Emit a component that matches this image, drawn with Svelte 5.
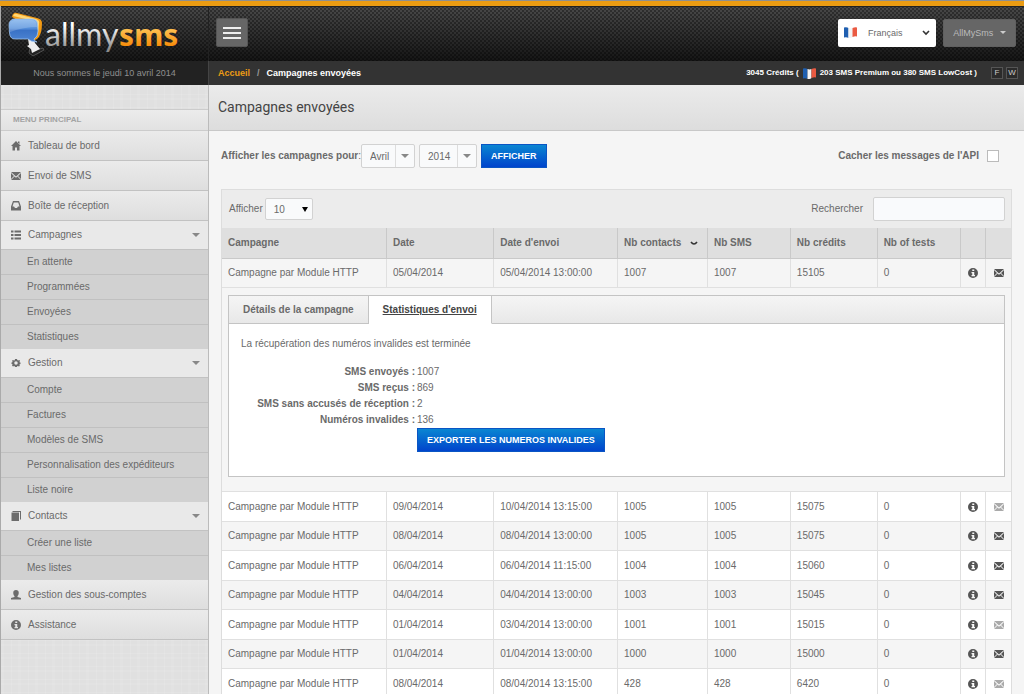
<script>
  const menu = [
    { label: 'Tableau de bord', icon: 'home' },
    { label: 'Envoi de SMS', icon: 'mail' },
    { label: 'Boîte de réception', icon: 'inbox' },
    { label: 'Campagnes', icon: 'list', children: ['En attente', 'Programmées', 'Envoyées', 'Statistiques'] },
    {
      label: 'Gestion',
      icon: 'gear',
      children: ['Compte', 'Factures', 'Modèles de SMS', 'Personnalisation des expéditeurs', 'Liste noire']
    },
    { label: 'Contacts', icon: 'book', children: ['Créer une liste', 'Mes listes'] },
    { label: 'Gestion des sous-comptes', icon: 'user' },
    { label: 'Assistance', icon: 'info' }
  ];

  // Column widths are percentages of the table
  const columns = [
    { label: 'Campagne', width: 20.9 },
    { label: 'Date', width: 13.6 },
    { label: "Date d'envoi", width: 15.7 },
    { label: 'Nb contacts', width: 11.4, sorted: true },
    { label: 'Nb SMS', width: 10.5 },
    { label: 'Nb crédits', width: 11 },
    { label: 'Nb of tests', width: 10.6 },
    { label: '', width: 3.2 },
    { label: '', width: 3.1 }
  ];

  const campaigns = [
    { cells: ['05/04/2014', '05/04/2014 13:00:00', 1007, 1007, 15105, 0], mail: true, open: true },
    { cells: ['09/04/2014', '10/04/2014 13:15:00', 1005, 1005, 15075, 0], mail: false },
    { cells: ['08/04/2014', '08/04/2014 13:00:00', 1005, 1005, 15075, 0], mail: true },
    { cells: ['06/04/2014', '06/04/2014 11:15:00', 1004, 1004, 15060, 0], mail: true },
    { cells: ['04/04/2014', '04/04/2014 13:00:00', 1003, 1003, 15045, 0], mail: true },
    { cells: ['01/04/2014', '03/04/2014 13:00:00', 1001, 1001, 15015, 0], mail: false },
    { cells: ['01/04/2014', '01/04/2014 13:00:00', 1000, 1000, 15000, 0], mail: true },
    { cells: ['08/04/2014', '08/04/2014 13:15:00', 428, 428, 6420, 0], mail: false }
  ];

  const stats = [
    ['SMS envoyés :', 1007],
    ['SMS reçus :', 869],
    ['SMS sans accusés de réception :', 2],
    ['Numéros invalides :', 136]
  ];

  let hideApi = $state(false);
  let search = $state('');
</script>

{#snippet icon(name)}
  <svg class="icon" viewBox="0 0 20 20" aria-hidden="true">
    {#if name === 'home'}
      <path d="M10 0 20 10h-3v9h-5v-6H8v6H3v-9H0z" /><path d="M14 1h3v5l-3-3z" />
    {:else if name === 'mail'}
      <path d="M0 2h20l-10 9z" />
      <path d="M0 4l6 6-6 6zM20 4l-6 6 6 6zM7 11l3 2.500 3-2.500 7 7H0z" />
    {:else if name === 'inbox'}
      <path fill-rule="evenodd" d="M4 0h12l4 11v8H0v-8zM5.500 3 3 11h3l2 3h4l2-3h3l-2.500-8z" />
    {:else if name === 'list'}
      <path d="M0 1h5v4H0zM7 1h13v4H7zM0 8h5v4H0zM7 8h13v4H7zM0 15h5v4H0zM7 15h13v4H7z" />
    {:else if name === 'gear'}
      <path
        fill-rule="evenodd"
        d="M8 2h4l.5 2 2 .8L16.500 4 18 5.500l-1 2 .6 1.300 1.400.2v3l-1.600.3-.6 1.700 1 1.500L16 17l-2.200-1-1.500.5L12 18H8l-.5-1.500-1.500-.6L4 17l-2-2 1-1.500-.6-1.500L1 12V9l1.500-.5.6-1.500L2 5.500 4 4l2 1 1.500-.6zM10 6.500a3.500 3.500 0 1 0 0 7 3.500 3.500 0 0 0 0-7z"
      />
    {:else if name === 'book'}
      <path d="M3 0h17v17h-2V2H3z" /><path d="M1 3h15v17H1z" />
    {:else if name === 'user'}
      <path d="M10 0c3.500 0 5.500 2 5.500 5.500 0 3-1 5-2.500 6.500v2L20 16v3H0v-3l7-2v-2C5.500 10.500 4.500 8.500 4.500 5.500 4.500 2 6.500 0 10 0z" />
    {:else if name === 'info'}
      <path
        fill-rule="evenodd"
        d="M10 0a10 10 0 1 0 0 20 10 10 0 0 0 0-20zM8.500 3h4v3h-4zM7 8h5.500v6H14v2.500H7V14h1.500v-3.500H7z"
      />
    {/if}
  </svg>
{/snippet}

{#snippet flag()}
  <svg class="flag" viewBox="0 0 13 11" aria-hidden="true">
    <path fill="#1f5fb0" d="M0 .5Q3 0 4.500 1v10Q3 10 0 10.500z" />
    <path fill="#f4f4f4" d="M4.500 1q2 .8 4 0v9q-2 1.500-4 1z" />
    <path fill="#ea5a42" d="M8.500 1q2.500-1 4.500-.5v9q-2-.5-4.500.5z" />
  </svg>
{/snippet}

<div class="page">
  <header class="topbar">
    <a class="brand side" href="#accueil" aria-label="allmysms">
      <svg class="logo" viewBox="0 0 180 50">
        <defs>
          <linearGradient id="silver" x1="0" y1="0" x2="0" y2="1">
            <stop offset="0.3" stop-color="#fff" /><stop offset="0.9" stop-color="#8c8c8c" />
          </linearGradient>
          <linearGradient id="amber" x1="0" y1="0" x2="0" y2="1">
            <stop offset="0.4" stop-color="#fdbd4c" /><stop offset="0.8" stop-color="#f68a07" />
          </linearGradient>
          <linearGradient id="bubble" x1="0" y1="0" x2="0" y2="1">
            <stop offset="0" stop-color="#7fb2ec" /><stop offset="0.4" stop-color="#5590dc" />
            <stop offset="0.5" stop-color="#3a72c6" /><stop offset="1" stop-color="#4f86d4" />
          </linearGradient>
        </defs>
        <path fill="#222" stroke="#777" stroke-width=".6" d="M29 39l6 2 7-2 1 2-11 6-4-3z" />
        <path fill="#eee" d="M27 30l6 1 1 3 5 6-8 4-1-4-4-3 2-1z" />
        <path fill="#f39a13" d="M11 8q1-5 5-4l20 5q5 1 5 5 0 12-5 16l-4 2-4-14z" />
        <path fill="#ffd675" d="M12 7q1-3 4-2l19 5q4 1 3 5l-1 9-4-12z" />
        <path
          fill="url(#bubble)"
          stroke="#a8cbf3"
          stroke-width=".7"
          d="M13 10h18q5 0 5.500 5l.5 7q0 6-4 8 0 2 3 3-6 0-9-3H14q-5 0-5.500-6L8 16q0-5 5-6z"
        />
        <path fill="#fff" opacity=".2" d="M13 11h18q4 0 4.500 4l.5 3q-13 0-27 5l-.5-7q0-4 4.500-5z" />
        <text x="44" y="37" fill="url(#silver)" class="word">allmy</text>
        <text x="118" y="37" fill="url(#amber)" class="word strong">sms</text>
      </svg>
    </a>
    <div class="topmain">
      <button class="burger" aria-label="Menu"><i></i><i></i><i></i></button>
      <div class="account">
        <div class="lang">
          {@render flag()}
          <select aria-label="Langue"><option>Français</option></select>
          <svg class="chevron" viewBox="0 0 8 6" aria-hidden="true"><path d="M1 1l3 3 3-3" /></svg>
        </div>
        <button class="user">AllMySms <span class="caret"></span></button>
      </div>
    </div>
  </header>

  <div class="infobar">
    <div class="side today">Nous sommes le jeudi 10 avril 2014</div>
    <div class="infomain">
      <nav class="crumbs"><a href="#accueil">Accueil</a><span>/</span><b>Campagnes envoyées</b></nav>
      <div class="credits"><span>3045 Crédits (</span>{@render flag()}<span>203 SMS Premium ou 380 SMS LowCost )</span></div>
      <div class="modes"><button>F</button><button>W</button></div>
    </div>
  </div>

  <div class="body">
    <aside class="side sidebar">
      <h2>MENU PRINCIPAL</h2>
      <ul class="menu">
        {#each menu as item}
          <li>
            <a class="entry" class:group={item.children} href="#{item.icon}">
              {@render icon(item.icon)}
              <span>{item.label}</span>
              {#if item.children}<i class="caret"></i>{/if}
            </a>
            {#if item.children}
              <ul class="sub">
                {#each item.children as child}
                  <li><a href="#{item.icon}">{child}</a></li>
                {/each}
              </ul>
            {/if}
          </li>
        {/each}
      </ul>
    </aside>

    <main>
      <h1>Campagnes envoyées</h1>
      <div class="content">
        <form class="filters">
          <label for="month"><b>Afficher les campagnes pour</b>:</label>
          <div class="picker">
            <select id="month"><option>Avril</option></select><span class="arrow"><i class="caret"></i></span>
          </div>
          <div class="picker year">
            <select aria-label="Année"><option>2014</option></select><span class="arrow"><i class="caret"></i></span>
          </div>
          <button class="primary" type="button">AFFICHER</button>
          <label class="api"><b>Cacher les messages de l'API</b><input type="checkbox" bind:checked={hideApi} /></label>
        </form>

        <section class="panel">
          <div class="tools">
            <label for="length">Afficher</label>
            <div class="length">
              <select id="length"><option>10</option></select><i class="caret"></i>
            </div>
            <label class="search">Rechercher <input type="text" bind:value={search} /></label>
          </div>
          <table>
            <colgroup>
              {#each columns as col}<col style="width: {col.width}%" />{/each}
            </colgroup>
            <thead>
              <tr>
                {#each columns as col}
                  <th>
                    {col.label}
                    {#if col.sorted}
                      <svg class="sort" viewBox="0 0 8 6" aria-hidden="true"><path d="M1 1q3 4 6 0" /></svg>
                    {/if}
                  </th>
                {/each}
              </tr>
            </thead>
            <tbody>
              {#each campaigns as campaign, i}
                <tr class:even={i % 2 === 0}>
                  <td>Campagne par Module HTTP</td>
                  {#each campaign.cells as cell}<td>{cell}</td>{/each}
                  <td class="action">{@render icon('info')}</td>
                  <td class="action" class:off={!campaign.mail}>{@render icon('mail')}</td>
                </tr>
                {#if campaign.open}
                  <tr>
                    <td class="detail" colspan="9">
                      <div class="box">
                        <div class="tabs">
                          <button>Détails de la campagne</button>
                          <button class="active">Statistiques d'envoi</button>
                          <span class="rest"></span>
                        </div>
                        <div class="stats">
                          <p>La récupération des numéros invalides est terminée</p>
                          <dl>
                            {#each stats as [name, value]}
                              <dt>{name}</dt>
                              <dd>{value}</dd>
                            {/each}
                            <dd class="export"><button class="primary">EXPORTER LES NUMEROS INVALIDES</button></dd>
                          </dl>
                        </div>
                      </div>
                    </td>
                  </tr>
                {/if}
              {/each}
            </tbody>
          </table>
        </section>
      </div>
    </main>
  </div>
</div>

<style>
  :global(body) {
    background: #f5f5f5;
  }

  :global(html) {
    scrollbar-width: none;
  }

  .page {
    display: flex;
    flex-direction: column;
    box-sizing: border-box;
    min-height: 100vh;
    border-top: 1px solid #8f8f8f;
    font: 10px/16px 'Liberation Sans', Arial, sans-serif;
    color: #6a6a6a;
  }

  .page :is(button, select, input) {
    box-sizing: border-box;
    margin: 0;
    font-family: inherit;
    color: inherit;
  }

  .page a {
    color: inherit;
    text-decoration: none;
  }

  ul, dl, dd, p, h1, h2 {
    margin: 0;
    padding: 0;
    list-style: none;
  }

  .side {
    box-sizing: border-box;
    flex: 0 0 209px;
    border-left: 1px solid #aaa;
    border-right: 1px solid #bbb;
  }

  .caret {
    display: inline-block;
    border: 4px solid transparent;
    border-top-color: #888;
    border-bottom: 0;
  }

  .icon {
    flex: none;
    width: 10px;
    height: 10px;
    fill: #6c6c6c;
  }

  .flag {
    width: 13px;
    height: 11px;
  }

  /* Dark header with the woven dot pattern */
  .topbar {
    display: flex;
    height: 55px;
    border-top: 5px solid #eb9c13;
    box-shadow: inset 0 1px #222;
    background:
      conic-gradient(rgba(0, 0, 0, 0.35) 25%, transparent 0 50%, rgba(0, 0, 0, 0.35) 0 75%, transparent 0) 0 0 / 4px 4px,
      linear-gradient(#4a4a4a, #151515);
  }

  .brand {
    display: block;
    border-right-color: #222;
  }

  .logo {
    display: block;
    width: 180px;
    height: 50px;
    margin-top: 3px;
  }

  .word {
    font: 32px Lato, sans-serif;
  }

  .strong {
    font: bold 30px 'Open Sans', sans-serif;
  }

  .topmain {
    display: flex;
    flex: 1;
    align-items: center;
    justify-content: space-between;
    padding: 0 8px 2px 7px;
  }

  .burger {
    display: flex;
    flex-direction: column;
    gap: 3px;
    align-items: center;
    justify-content: center;
    width: 32px;
    height: 29px;
    border: 1px solid #555;
    border-radius: 2px;
    background: #666;
  }

  .burger i {
    width: 18px;
    height: 2px;
    background: #eee;
  }

  .account {
    display: flex;
    gap: 7px;
  }

  .lang {
    display: flex;
    align-items: center;
    width: 98px;
    height: 28px;
    box-sizing: border-box;
    padding: 0 6px;
    border-radius: 2px;
    background: #fff;
  }

  .lang select {
    appearance: none;
    flex: 1;
    padding: 0 0 0 11px;
    border: 0;
    background: none;
    font-size: 9px;
  }

  .chevron, .sort {
    width: 8px;
    height: 6px;
    fill: none;
    stroke: #333;
    stroke-width: 1.6;
  }

  .page .user {
    width: 73px;
    height: 28px;
    padding: 0;
    border: 1px solid #606060;
    border-radius: 2px;
    background: #666;
    color: #bbb;
    font-size: 9px;
  }

  .user .caret {
    margin: 0 0 2px 4px;
    border-width: 3px;
    border-bottom: 0;
    border-top-color: #ccc;
  }

  .infobar {
    display: flex;
    height: 24px;
    background: #333;
    font-size: 9px;
    line-height: 24px;
  }

  .today {
    background: #222;
    border-right-color: #444;
    color: #8f8f8f;
    text-align: center;
  }

  .infomain {
    display: flex;
    flex: 1;
    padding: 0 6px 0 9px;
    color: #fff;
    font-weight: bold;
  }

  .crumbs a {
    color: #eb9c13;
  }

  .crumbs span {
    padding: 0 7px;
    color: #999;
  }

  .credits {
    display: flex;
    gap: 4px;
    align-items: center;
    margin-left: auto;
    font-size: 8px;
  }

  .modes {
    display: flex;
    gap: 3px;
    align-items: center;
    padding-left: 14px;
  }

  .page .modes button {
    width: 12px;
    height: 12px;
    padding: 0;
    border: 1px solid #555;
    background: #2b2b2b;
    color: #ccc;
    font-size: 8px;
    line-height: 10px;
  }

  .body {
    display: flex;
    flex: 1;
  }

  /* Linen texture */
  .sidebar {
    padding-top: 24px;
    background:
      repeating-linear-gradient(90deg, rgba(255, 255, 255, 0.08) 0 3px, transparent 3px 10px, rgba(255, 255, 255, 0.1) 10px 11px, transparent 11px 17px),
      repeating-linear-gradient(rgba(255, 255, 255, 0.08) 0 2px, transparent 2px 9px, rgba(255, 255, 255, 0.1) 9px 10px, transparent 10px 13px),
      #e0e0e0;
  }

  .sidebar h2 {
    padding-left: 12px;
    border: 1px solid #ccc;
    border-width: 1px 0;
    background: linear-gradient(#ececec, #e2e2e2);
    color: #a3a3a3;
    font-size: 8px;
    line-height: 20px;
  }

  .entry {
    display: flex;
    gap: 7px;
    align-items: center;
    height: 29px;
    padding: 0 8px 0 10px;
    border-bottom: 1px solid #c2c2c2;
    background: linear-gradient(#ebebeb, #dedede);
  }

  .entry.group {
    height: 28px;
    background: #e9e9e9;
  }

  .entry .caret {
    margin-left: auto;
  }

  .sub {
    background: #d1d1d1;
  }

  .sub li {
    padding-left: 26px;
    border-bottom: 1px solid #c0c0c0;
    line-height: 24px;
  }

  .sub li:last-child {
    border-bottom: 0;
  }

  main {
    flex: 1;
    min-width: 0;
    background: #f5f5f5;
  }

  h1 {
    padding-left: 9px;
    border-bottom: 1px solid #c8c8c8;
    background: linear-gradient(#ebebeb, #dddddd);
    color: #444;
    font: 14px/45px Roboto, sans-serif;
  }

  .content {
    padding: 13px 12px 0;
  }

  .filters {
    display: flex;
    align-items: center;
    height: 24px;
    margin-bottom: 21px;
  }

  .picker {
    display: flex;
    box-sizing: border-box;
    width: 54px;
    height: 24px;
    margin-right: 4px;
    border: 1px solid #d2d2d2;
    border-radius: 2px;
    background: #f9fafb;
  }

  .picker.year {
    width: 58px;
  }

  .picker select {
    appearance: none;
    flex: 1;
    min-width: 0;
    padding: 0 0 0 8px;
    border: 0;
    background: none;
    font-size: 10px;
  }

  .arrow {
    display: flex;
    align-items: center;
    justify-content: center;
    width: 18px;
    border-left: 1px solid #ddd;
  }

  .page .primary {
    height: 24px;
    padding: 0 9px;
    border: 1px solid #0a55c4;
    background: linear-gradient(#0a86d2, #0044cc);
    color: #fff;
    font-size: 9px;
    font-weight: bold;
  }

  .filters .api {
    display: flex;
    gap: 8px;
    align-items: center;
    margin: 0 13px 0 auto;
  }

  .api input {
    appearance: none;
    width: 12px;
    height: 12px;
    border: 1px solid #bbb;
    background: #fff;
  }

  .api input:checked {
    background: #0a55c4;
  }

  .panel {
    border: 1px solid #ddd;
    border-bottom: 0;
  }

  .tools {
    display: flex;
    align-items: center;
    height: 38px;
    padding: 0 6px 0 7px;
    background: #ececec;
  }

  .length {
    display: flex;
    align-items: center;
    box-sizing: border-box;
    width: 48px;
    height: 22px;
    margin-left: 2px;
    padding-right: 4px;
    border: 1px solid #d2d2d2;
    border-radius: 2px;
    background: #f9fafb;
  }

  .length select {
    appearance: none;
    flex: 1;
    min-width: 0;
    padding: 0 0 0 8px;
    border: 0;
    background: none;
    font-size: 10px;
  }

  .length .caret {
    border-width: 5px 3px 0;
    border-top-color: #000;
  }

  .search {
    display: flex;
    gap: 10px;
    align-items: center;
    margin-left: auto;
  }

  .search input {
    width: 132px;
    height: 24px;
    border: 1px solid #d2d2d2;
    border-radius: 2px;
    background: #f9fafc;
  }

  table {
    width: 100%;
    table-layout: fixed;
    border-spacing: 0;
  }

  th, td {
    box-sizing: border-box;
    padding: 0 6px;
    border-right: 1px solid #e0e0e0;
    border-bottom: 1px solid #e0e0e0;
    text-align: left;
    white-space: nowrap;
  }

  :is(th, td):last-child {
    border-right: 0;
  }

  th {
    height: 31px;
    border-color: #c9c9c9;
    background: #dfdfdf;
  }

  .sort {
    float: right;
    margin: 6px 3px 0 0;
  }

  td {
    height: 30px;
    background: #fff;
  }

  .even td {
    height: 29px;
    background: #f5f5f5;
  }

  .page .action {
    padding: 0;
    text-align: center;
  }

  .action .icon {
    display: block;
    margin: 0 auto;
    fill: #555;
  }

  .action.off .icon {
    fill: #aaa;
  }

  .page .detail {
    padding: 7px 6px 14px;
    background: #f5f5f5;
    white-space: normal;
  }

  .box {
    border: 1px solid #c4c4c4;
    background: #fff;
  }

  .tabs {
    display: flex;
    height: 28px;
  }

  .tabs > * {
    border: 0;
    border-right: 1px solid #c4c4c4;
    border-bottom: 1px solid #c4c4c4;
    background: linear-gradient(#f5f5f5, #e8e8e8);
  }

  .tabs button {
    padding: 0 14px;
    font-size: 10px;
    font-weight: bold;
  }

  .page .tabs .active {
    border-bottom-color: #fff;
    background: #fff;
    color: #444;
    text-decoration: underline;
  }

  .tabs .rest {
    flex: 1;
    border-right: 0;
  }

  .stats {
    padding: 12px 12px 24px;
  }

  .stats p {
    margin-bottom: 12px;
  }

  .stats dl {
    display: grid;
    grid-template-columns: 174px 1fr;
    column-gap: 2px;
  }

  .stats dt {
    font-weight: bold;
    text-align: right;
  }

  .export {
    display: flex;
    grid-column: 2;
  }
</style>
